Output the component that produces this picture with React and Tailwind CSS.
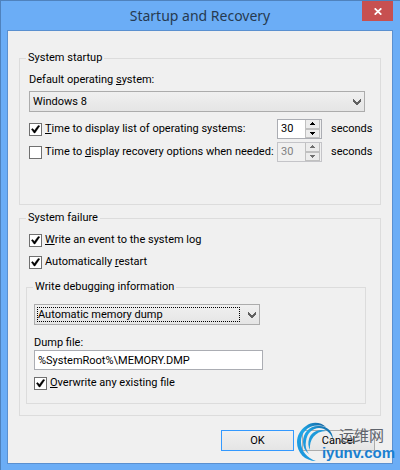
import { useState } from 'react';

function Chevron() {
   return (
      <svg
         className="pointer-events-none absolute top-2 right-1 h-[7px] w-2"
         viewBox="0 0 8 7"
         shapeRendering="crispEdges"
      >
         <path
            d="M0 0h1v1h1v1h1v1h2v-1h1v-1h1v-1h1v3h-1v1h-1v1h-1v1h-2v-1h-1v-1h-1v-1h-1z"
            fill="#606060"
         />
      </svg>
   );
}

function Dropdown({ id, options, focused }) {
   return (
      <div className="relative">
         <select
            id={id}
            className="block h-[21px] w-full appearance-none border border-[#acacac] bg-linear-to-b from-[#f0f0f0] to-[#e5e5e5] px-[3px] outline-none"
         >
            {options.map((option) => (
               <option key={option}>{option}</option>
            ))}
         </select>
         {focused && (
            <span className="pointer-events-none absolute inset-y-[3px] right-5 left-[3px] border border-dotted border-black" />
         )}
         <Chevron />
      </div>
   );
}

function Check({ id, defaultChecked, children }) {
   const [checked, setChecked] = useState(Boolean(defaultChecked));

   return (
      <div className="flex h-4 items-center gap-[3px]">
         <span className="relative block size-[13px] shrink-0">
            <input
               id={id}
               type="checkbox"
               checked={checked}
               onChange={(e) => setChecked(e.target.checked)}
               className="block size-[13px] appearance-none border border-[#707070] bg-white"
            />
            {checked && (
               <svg
                  className="pointer-events-none absolute inset-0 size-[13px]"
                  viewBox="0 0 13 13"
               >
                  <path
                     d="M2.4 6.3 3.7 5.6 5.4 7.5 9.2 2.4 10.8 2.9 6 10 5.1 10z"
                     fill="#000"
                     stroke="#000"
                     strokeWidth=".4"
                  />
               </svg>
            )}
         </span>
         <label htmlFor={id} className="whitespace-nowrap">
            {children}
         </label>
      </div>
   );
}

function Spinner({ label, disabled }) {
   const [value, setValue] = useState(30);

   return (
      <div
         className={`flex h-5 w-[45px] shrink-0 border ${
            disabled
               ? 'border-[#c4c4c8] bg-[#f0f0f0] text-[#808080]'
               : 'border-[#abadb3] bg-white'
         }`}
      >
         <input
            type="text"
            aria-label={label}
            value={value}
            disabled={disabled}
            onChange={(e) => setValue(Number(e.target.value) || 0)}
            className="w-0 min-w-0 flex-1 pl-[3px] outline-none"
         />
         <div className="flex w-4 flex-col bg-[#f0f0f0] pr-px">
            <button
               type="button"
               aria-label="Increase"
               disabled={disabled}
               onClick={() => setValue(value + 1)}
               className="flex flex-1 items-center justify-center border border-t-0 border-[#c0c0c0] bg-[#ececec]"
            >
               <svg className="h-[3px] w-[5px]" viewBox="0 0 5 3" shapeRendering="crispEdges">
                  <path d="M2 0h1v1h1v1h1v1H0V2h1V1h1z" fill={disabled ? '#707070' : '#000'} />
               </svg>
            </button>
            <button
               type="button"
               aria-label="Decrease"
               disabled={disabled}
               onClick={() => setValue(value - 1)}
               className="flex flex-1 items-center justify-center border border-[#c0c0c0] bg-[#ececec]"
            >
               <svg className="h-[3px] w-[5px]" viewBox="0 0 5 3" shapeRendering="crispEdges">
                  <path d="M0 0h5v1H4v1H3v1H2V2H1V1H0z" fill={disabled ? '#707070' : '#000'} />
               </svg>
            </button>
         </div>
      </div>
   );
}

function Group({ title, className, children }) {
   return (
      <fieldset className="min-w-0 border border-[#dcdcdc]">
         <legend className="ml-[6px] px-[2px] leading-[14px]">{title}</legend>
         <div className={className}>{children}</div>
      </fieldset>
   );
}

function Watermark() {
   return (
      <div className="pointer-events-none absolute right-[5px] bottom-1 h-11 w-[98px]">
         <svg className="absolute top-0 left-0 h-10 w-10" viewBox="0 0 40 40">
            <defs>
               <linearGradient id="ring" x1="0" y1="1" x2="1" y2="0">
                  <stop offset="0" stopColor="#1b8fd8" />
                  <stop offset=".5" stopColor="#1ea6e6" />
                  <stop offset="1" stopColor="#14609c" />
               </linearGradient>
            </defs>
            <path
               d="M29 5C24 0 15-1 9 4 3 8 0 14 0 20c0 11 8 19 19 19C10 36 4 29 4 20 4 9 14 0 29 5z"
               fill="url(#ring)"
            />
            <path
               d="M36 17C36 9 29 3 21 4 12 4 6 11 6 20c0 5 2 9 6 12-3-4-4-8-3-13C10 11 16 6 22 6c6 0 11 4 14 11z"
               fill="url(#ring)"
            />
            <path d="M29 9C22 6 14 10 12 17c-1 4-1 7 1 11-1-10 5-19 16-19z" fill="#1e9ada" />
         </svg>
         <span className="absolute top-[5px] right-[11px] font-['Noto_Sans_CJK_SC',sans-serif] text-[15px] leading-4 text-[#60646c]">
            运维网
         </span>
         <span className="absolute right-0 bottom-[5px] font-['Liberation_Sans',sans-serif] text-[15px] leading-4 font-bold text-[#1a80d0]">
            iyunv.com
         </span>
      </div>
   );
}

export default function App() {
   return (
      <main className="relative flex min-h-screen flex-col border-t border-l border-[#4f82bd] bg-[#6badf6] pr-[7px] pb-[6px] pl-[6px] font-[Roboto,sans-serif] text-[11px] leading-4 text-black">
         <header className="relative h-[29px] text-center">
            <h1 className="font-['Noto_Sans',sans-serif] text-[14px] leading-[29px] text-[#263a50]">
               Startup and Recovery
            </h1>
            <button
               type="button"
               aria-label="Close"
               className="absolute top-0 right-0 flex h-5 w-[31px] items-center justify-center bg-[#c75050]"
            >
               <svg className="h-[7px] w-2" viewBox="0 0 8 7">
                  <path d="M.7.3 7.3 6.7M7.3.3.7 6.7" stroke="#fff" strokeWidth="1.7" />
               </svg>
            </button>
         </header>

         <form
            onSubmit={(e) => e.preventDefault()}
            className="flex flex-1 flex-col gap-[6px] border border-[#5a90d0] bg-[#f0f0f0] px-[11px] pt-5 pb-3"
         >
            <Group title="System startup" className="pt-[7px] pr-[15px] pb-[42px] pl-[9px]">
               <label htmlFor="os">
                  Default operating <u>s</u>ystem:
               </label>
               <div className="mt-[3px]">
                  <Dropdown id="os" options={['Windows 8']} />
               </div>
               <div className="mt-[7px] flex flex-col gap-[3px]">
                  <div className="flex items-center">
                     <div className="flex-1">
                        <Check id="list" defaultChecked>
                           <u>T</u>ime to display list of operating systems:
                        </Check>
                     </div>
                     <Spinner label="Seconds to display operating systems" />
                     <span className="w-[43px] pl-[9px]">seconds</span>
                  </div>
                  <div className="flex items-center">
                     <div className="flex-1">
                        <Check id="recovery">
                           Time to <u>d</u>isplay recovery options when needed:
                        </Check>
                     </div>
                     <Spinner label="Seconds to display recovery options" disabled />
                     <span className="w-[43px] pl-[9px]">seconds</span>
                  </div>
               </div>
            </Group>

            <Group title="System failure" className="pr-[14px] pb-[11px] pl-[6px]">
               <div className="flex flex-col gap-[6px] pt-[7px] pb-[10px] pl-[3px]">
                  <Check id="event" defaultChecked>
                     <u>W</u>rite an event to the system log
                  </Check>
                  <Check id="restart" defaultChecked>
                     Automatically <u>r</u>estart
                  </Check>
               </div>
               <Group
                  title={<label htmlFor="dump-type">Write debugging information</label>}
                  className="pt-[10px] pr-[102px] pb-3 pl-[7px]"
               >
                  <div className="mr-[3px]">
                     <Dropdown id="dump-type" options={['Automatic memory dump']} focused />
                  </div>
                  <label htmlFor="dump" className="mt-[10px] block leading-[15px]">
                     Dump file:
                  </label>
                  <input
                     id="dump"
                     type="text"
                     defaultValue="%SystemRoot%\MEMORY.DMP"
                     className="mb-[5px] block h-5 w-full border border-[#abadb3] bg-white px-[3px] outline-none"
                  />
                  <Check id="overwrite" defaultChecked>
                     <u>O</u>verwrite any existing file
                  </Check>
               </Group>
            </Group>

            <div className="mt-2 flex justify-end gap-2 pr-[6px]">
               <button
                  type="submit"
                  className="h-[21px] w-[73px] border border-[#3399ff] bg-linear-to-b from-[#f0f0f0] to-[#e5e5e5]"
               >
                  OK
               </button>
               <button
                  type="button"
                  className="h-[21px] w-[73px] border border-[#acacac] bg-linear-to-b from-[#f0f0f0] to-[#e5e5e5]"
               >
                  Cancel
               </button>
            </div>
         </form>
         <Watermark />
      </main>
   );
}
